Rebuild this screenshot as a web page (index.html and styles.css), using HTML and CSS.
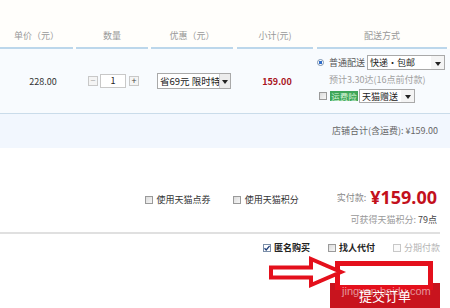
FILE: index.html
```html
<!DOCTYPE html>
<html lang="zh-CN">
<head>
<meta charset="utf-8">
<title>确认订单</title>
<link rel="stylesheet" href="styles.css">
</head>
<body>
<div class="page">
  <div class="thead">
    <div class="th">单价（元）</div>
    <div class="th">数量</div>
    <div class="th">优惠（元）</div>
    <div class="th">小计(元)</div>
    <div class="th">配送方式</div>
  </div>

  <div class="row">
    <div class="cell price">228.00</div>
    <div class="cell qty">
      <span class="qbtn">−</span><span class="qinput">1</span><span class="qbtn plus">+</span>
    </div>
    <div class="cell promo">
      <div class="sel sel-promo"><span class="sel-text">省69元 限时特价</span><span class="sel-arrow"></span></div>
    </div>
    <div class="cell subtotal">159.00</div>
    <div class="cell ship">
      <div class="ship-line">
        <span class="radio"></span><span class="ship-label">普通配送</span>
        <div class="sel sel-ship"><span class="sel-text">快递·包邮</span><span class="sel-arrow plain"></span></div>
      </div>
      <div class="ship-eta">预计3.30达(16点前付款)</div>
      <div class="ship-line line3">
        <span class="cbox"></span><span class="badge">运费险</span>
        <div class="sel sel-ins"><span class="sel-text">天猫赠送</span><span class="sel-arrow plain"></span></div>
      </div>
    </div>
  </div>

  <div class="store-total">店铺合计(含运费): ¥159.00</div>

  <div class="summary">
    <div class="use-opts">
      <label class="opt"><span class="cbox"></span>使用天猫点券</label>
      <label class="opt"><span class="cbox"></span>使用天猫积分</label>
    </div>
    <div class="pay">
      <div class="pay-line"><span class="pay-label">实付款:</span><span class="pay-amount">¥159.00</span></div>
      <div class="points">可获得天猫积分: <span class="points-num">79点</span></div>
    </div>
  </div>

  <div class="buy-opts">
    <label class="opt2"><span class="cbox checked"><svg viewBox="0 0 8 8" width="8" height="8"><path d="M1.5 4.2 L3.2 6 L6.6 1.8" fill="none" stroke="#1f3f7a" stroke-width="1.3"/></svg></span>匿名购买</label>
    <label class="opt2"><span class="cbox"></span>找人代付</label>
    <label class="opt2 disabled"><span class="cbox light"></span>分期付款</label>
  </div>

  <div class="submit-wrap">
    <div class="submit">提交订单</div>
  </div>

  <svg class="annot" width="450" height="308" viewBox="0 0 450 308">
    <rect x="337.5" y="263.5" width="93" height="24" fill="#ffffff" stroke="#e4101c" stroke-width="5"/>
    <path d="M271 267.5 L311 267.5 L311 259 L341 272 L311 285 L311 277.5 L271 277.5 Z" fill="#ffffff" stroke="#e4101c" stroke-width="4" stroke-linejoin="miter"/>
    <text x="342" y="295" class="wm">jingyan.baidu.com</text>
  </svg>
</div>
</body>
</html>
```

FILE: styles.css
```css
* { box-sizing: border-box; }
html, body { margin: 0; padding: 0; background: #ffffff; }
body {
  font-family: "Noto Sans CJK SC", "Noto Sans", "Liberation Sans", sans-serif;
  font-size: 9px;
  color: #333;
  width: 450px;
  height: 308px;
  overflow: hidden;
}
.page { position: relative; width: 450px; height: 308px; }

/* header */
.thead {
  display: grid;
  grid-template-columns: 76px 75px 86px 80px 133px;
  background: #fffefb;
}
.th {
  height: 49px;
  padding-top: 30px;
  line-height: 12px;
  text-align: center;
  color: #999;
  border-bottom: 2px solid #bcd7eb;
  margin-right: 3px;
}
.th:nth-child(3), .th:nth-child(4) { margin-right: 4px; }

/* item row */
.row {
  display: grid;
  grid-template-columns: 76px 75px 86px 80px 133px;
  height: 65px;
  background: #f8fbfe;
  border-bottom: 1px solid #cadcea;
}
.cell { display: flex; align-items: center; }
.price { justify-content: center; padding-left: 10px; color: #333; }
.qty { justify-content: center; gap: 2px; }
.qbtn {
  width: 10px; height: 10px;
  border: 1px solid #c8c8c8;
  background: #f4f4f4;
  color: #aaa;
  font-size: 9px;
  line-height: 8px;
  text-align: center;
}
.qbtn.plus { color: #444; margin-left: 1px; }
.qinput {
  width: 26px; height: 14px;
  border: 1px solid #c8c8c8;
  background: #fff;
  text-align: center;
  line-height: 12px;
  color: #222;
}
.promo { padding-left: 6px; }
.subtotal { justify-content: center; color: #a8141c; font-weight: bold; }

/* fake selects */
.sel {
  display: flex;
  align-items: center;
  border: 1px solid #a9a9a9;
  background: #fff;
}
.sel-text {
  flex: 1;
  overflow: hidden;
  white-space: nowrap;
  padding-left: 2px;
  color: #222;
}
.sel-arrow {
  position: relative;
  align-self: stretch;
  width: 11px;
  background: #ececec;
  border-left: 1px solid #d0d0d0;
}
.sel-arrow.plain { background: #f4f4f4; border-left: none; width: 13px; }
.sel-arrow::after {
  content: "";
  position: absolute;
  left: 50%; top: 50%;
  margin-left: -3px; margin-top: -1px;
  border-left: 3px solid transparent;
  border-right: 3px solid transparent;
  border-top: 4px solid #222;
}
.sel-promo { width: 74px; height: 16px; line-height: 14px; font-size: 9.5px; overflow: hidden; }
.sel-ship { width: 78px; height: 15px; line-height: 13px; margin-left: 2px; }
.sel-ins { width: 56px; height: 14px; line-height: 13px; margin-left: 1px; font-size: 9px; }

/* shipping */
.ship { flex-direction: column; align-items: flex-start; padding-top: 6px; }
.ship-line { display: flex; align-items: center; }
.radio {
  width: 7px; height: 7px;
  border-radius: 50%;
  border: 1px solid #7d93b0;
  background: radial-gradient(circle, #2f6cc9 0 1.6px, #ffffff 2px);
}
.ship-label { margin-left: 5px; color: #555; }
.ship-eta {
  margin-top: 3px;
  padding-left: 12px;
  line-height: 14px;
  color: #a0a0a0;
}
.line3 { margin-top: 2px; padding-left: 2px; }
.cbox {
  display: inline-block;
  width: 8px; height: 8px;
  border: 1px solid #9a9a9a;
  background: linear-gradient(135deg, #dcdcdc, #f7f7f7);
  vertical-align: middle;
}
.cbox.checked { background: #fff; border-color: #7a8ea8; position: relative; }
.cbox.checked svg { position: absolute; left: -1px; top: -1px; }
.cbox.light { border-color: #c8c8c8; background: #fafafa; }
.badge {
  margin-left: 3px;
  width: 28px; height: 10px;
  line-height: 10px;
  font-size: 8.5px;
  text-align: center;
  background: #3fa559;
  color: #d9f5d9;
}

/* store total */
.store-total {
  height: 34px;
  line-height: 34px;
  text-align: right;
  padding-right: 12px;
  background: #f2f7fe;
  color: #666;
}

/* summary */
.summary {
  width: 440px;
  height: 86px;
  padding-top: 38px;
  padding-right: 3px;
  display: flex;
  justify-content: flex-end;
  align-items: flex-start;
  border-bottom: 2px solid #e0e0e0;
}
.use-opts { display: flex; gap: 22px; margin-top: 8px; margin-right: 38px; line-height: 12px; }
.opt { display: flex; align-items: center; gap: 4px; color: #333; }
.pay { display: flex; flex-direction: column; align-items: flex-end; }
.pay-line { display: flex; align-items: center; height: 22px; }
.pay-label { color: #888; margin-right: 4px; }
.pay-amount { color: #c3101c; font-weight: bold; font-size: 18px; line-height: 22px; font-family: "Noto Sans", "DejaVu Sans", sans-serif; }
.points { margin-top: 6px; line-height: 12px; color: #999; }
.points-num { color: #444; }

/* buy options */
.buy-opts {
  width: 440px;
  display: flex;
  justify-content: flex-end;
  gap: 18px;
  padding-top: 8px;
  line-height: 12px;
}
.opt2 { display: flex; align-items: center; gap: 3px; color: #222; font-weight: bold; }
.opt2.disabled { color: #b5b5b5; font-weight: normal; }

/* submit */
.submit-wrap { width: 440px; display: flex; justify-content: flex-end; margin-top: 29px; }
.submit {
  width: 110px;
  height: 28px;
  background: #c8141e;
  color: #fff;
  font-size: 13px;
  text-align: center;
  line-height: 26px;
}

/* annotation overlay */
.annot { position: absolute; left: 0; top: 0; pointer-events: none; }
.wm { font-family: "Liberation Sans", sans-serif; font-size: 11px; fill: #ffffff; fill-opacity: 0.55; }
```
